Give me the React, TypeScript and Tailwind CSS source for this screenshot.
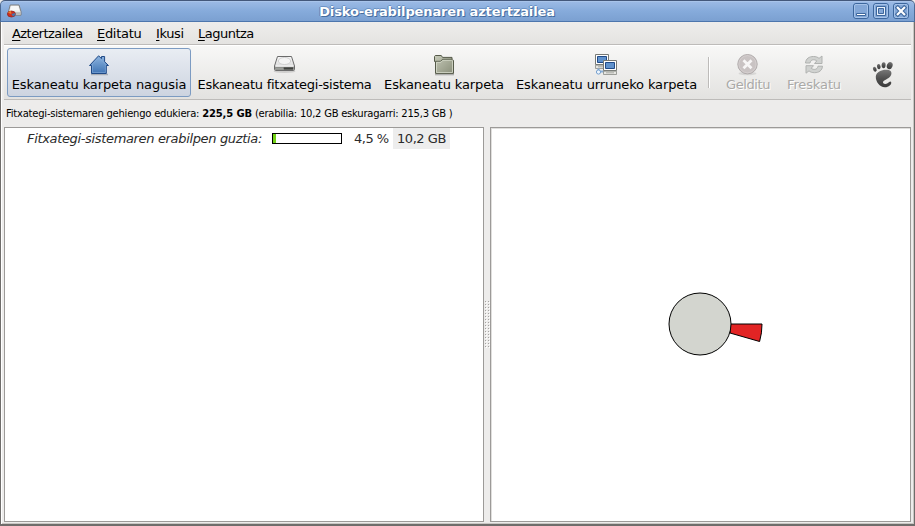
import type { ReactNode } from "react";

function DriveIcon() {
  return (
    <svg width="24" height="20" viewBox="0 0 24 20">
      <defs>
        <linearGradient id="drv" x1="0" y1="0" x2="0" y2="1">
          <stop offset="0" stopColor="#f8f8f8" />
          <stop offset="1" stopColor="#cfcfcf" />
        </linearGradient>
      </defs>
      <ellipse cx="11.5" cy="17.6" rx="11" ry="1.4" fill="#000" opacity=".13" />
      <path d="M4.5 2.5h14l3 9.5v3.5a1 1 0 0 1-1 1h-18a1 1 0 0 1-1-1v-3.5z" fill="url(#drv)" stroke="#6b6b6b" />
      <path d="M2.2 12.6h18.6v3.2H2.2z" fill="#7d7f7b" />
      <path d="M11 13.5h9v2h-9z" fill="#40423f" />
      <path d="M3 13.5h7v2H3z" fill="#9b9d99" />
      <ellipse cx="11.5" cy="7" rx="6.2" ry="3.5" fill="#f4f4f4" stroke="#c9c9c9" strokeWidth=".8" />
      <path d="M2.6 12.1h17.8" stroke="#fff" />
    </svg>
  );
}

function HomeIcon() {
  return (
    <svg width="22" height="22" viewBox="0 0 22 22">
      <defs>
        <linearGradient id="home" x1="0" y1="0" x2="0" y2="1">
          <stop offset="0" stopColor="#8db4df" />
          <stop offset="1" stopColor="#3f74b4" />
        </linearGradient>
      </defs>
      <path d="M3 20.5h17" stroke="#000" opacity=".22" strokeWidth="1.5" />
      <path d="M1.5 11.5 10.6 1.8l2.9 2.8V2.5h3.1v5.2l3.9 3.8h-2.2v8H3.5v-8z" fill="url(#home)" stroke="#204a87" strokeLinejoin="round" />
      <path d="M4.5 18.5v-8.4l6.1-6.6 6.8 6.6v8.4z" fill="none" stroke="#86aedb" strokeWidth=".7" opacity=".8" />
    </svg>
  );
}

function FolderIcon() {
  return (
    <svg width="22" height="22" viewBox="0 0 22 22">
      <defs>
        <linearGradient id="fold" x1="0" y1="0" x2="1" y2="1">
          <stop offset="0" stopColor="#c6cab9" />
          <stop offset="1" stopColor="#898e79" />
        </linearGradient>
      </defs>
      <path d="M2 20.6h19" stroke="#000" opacity=".25" strokeWidth="1.5" />
      <path d="M1.5 2.5 2.3 1.5h6l1.2 1.9h9.5v3H20.5v13h-18V7.5H1.5z" fill="url(#fold)" stroke="#555a49" strokeLinejoin="round" />
      <path d="M2.5 7.3h5l2-2h10" fill="none" stroke="#555a49" />
      <path d="M3.5 18.5V8.3h4.4l2-2h9.6v12.2z" fill="none" stroke="#d7dacb" strokeWidth=".8" />
    </svg>
  );
}

function Monitor({ x, y }: { x: number; y: number }) {
  return (
    <g transform={`translate(${x} ${y})`}>
      <path d="M.5.5h13v10H.5z" fill="#fff" stroke="#777975" />
      <path d="M2.5 2.5h9v6h-9z" fill="#5f91cc" stroke="#204a87" />
      <path d="M.5 11.2h13v3.3H.5z" fill="#e6e6e2" stroke="#888a85" strokeWidth=".8" />
      <path d="M3 12.8h8" stroke="#aaaca7" />
    </g>
  );
}

function NetworkIcon() {
  return (
    <svg width="24" height="22" viewBox="0 0 24 22">
      <Monitor x={0} y={0} />
      <path d="M3.5 14.5v3H10" stroke="#89add6" strokeWidth="2" fill="none" />
      <circle cx="3.5" cy="18" r="2.1" fill="#eef5fc" stroke="#74a0d0" />
      <Monitor x={8} y={6} />
    </svg>
  );
}

function StopIcon() {
  return (
    <svg width="24" height="22" viewBox="0 0 24 22">
      <ellipse cx="11.5" cy="19.5" rx="9" ry="1.8" fill="#000" opacity=".09" />
      <circle cx="11.5" cy="10.2" r="9.7" fill="#c9c3c3" stroke="#b0abab" />
      <circle cx="11.5" cy="10.2" r="8.6" fill="none" stroke="#d8d3d3" strokeWidth=".7" />
      <path d="m7.5 6.2 8 8m0-8-8 8" stroke="#f7f6f6" strokeWidth="2.8" />
    </svg>
  );
}

function RefreshIcon() {
  return (
    <svg width="22" height="22" viewBox="0 0 22 22" fill="#d0d2d0" stroke="#b0b2b0" strokeLinejoin="round">
      <path d="M2.5 9C2.8 4.6 6.2 2.5 10.4 2.5c2.5 0 4.3.6 5.6 1.9l3-2.4v7.5h-7.5l2.3-2.6C11.3 5 7.6 5.4 7 9z" />
      <path d="M19.5 12.2c-.3 4.4-3.7 6.5-7.9 6.5-2.5 0-4.3-.6-5.6-1.9l-3 2.4v-7.5h7.5l-2.3 2.6c2.5 1.9 6.2 1.5 6.8-2.1z" />
    </svg>
  );
}

function GnomeFoot() {
  return (
    <svg width="22" height="28" viewBox="0 0 22 28">
      <defs>
        <linearGradient id="foot" x1="0" y1="0" x2="0" y2="1">
          <stop offset="0" stopColor="#777" />
          <stop offset=".5" stopColor="#505050" />
          <stop offset="1" stopColor="#3b3b3b" />
        </linearGradient>
      </defs>
      <g fill="url(#foot)">
        <ellipse cx="17.7" cy="4.6" rx="2.8" ry="3.7" transform="rotate(22 17.7 4.6)" />
        <ellipse cx="11.6" cy="4.2" rx="2" ry="3" transform="rotate(3 11.6 4.2)" />
        <ellipse cx="6.8" cy="5.6" rx="1.8" ry="2.7" transform="rotate(-12 6.8 5.6)" />
        <ellipse cx="2.8" cy="8.2" rx="1.7" ry="2.5" transform="rotate(-25 2.8 8.2)" />
        <path d="M16.6 8.9C11.8 7.9 4.2 9.8 3.8 15.6c-.3 5.2 4 10.7 9 10.7 4.1 0 7-3 6.4-5.1-.6-1.7-2.1-.2-3.7 1-2.3 1.7-5.4.2-4.3-1.8.9-1.6 4.8-2.3 6.8-4.7 2.2-2.7 2-6.1-1.4-6.8z" />
      </g>
    </svg>
  );
}

function AppIcon() {
  return (
    <svg width="16" height="14" viewBox="0 0 16 14">
      <path d="M3.2 1h8.8l2 6.6v3.6H1.5V7.6z" fill="#e8e8e7" stroke="#777" strokeWidth=".9" />
      <path d="M4.3 1.9h7l1 4.6H3z" fill="#f8f8f8" />
      <path d="M2.5 8.2h11v2.5h-11z" fill="#b9bab8" />
      <ellipse cx="4.4" cy="10" rx="4" ry="3" fill="#cf2f21" stroke="#8d2017" strokeWidth=".7" />
      <path d="M4.4 10 8.2 9a4 3 0 0 1-2.2 3.4z" fill="#4675ae" />
      <path d="M4.4 10 1 8.8A4 3 0 0 1 4 7.1z" fill="#e7812c" />
    </svg>
  );
}

function WindowButton({ children }: { children: ReactNode }) {
  return (
    <svg width="16" height="16" viewBox="0 0 16 16">
      <rect x=".5" y=".5" width="15" height="15" rx="2.5" fill="#83a7d7" stroke="#3d679d" />
      <rect x="1.5" y="1.5" width="13" height="13" rx="1.5" fill="none" stroke="#a5c2e8" />
      {children}
    </svg>
  );
}

function ToolButton({ icon, label, box, text, active, disabled }: {
  icon: ReactNode; label: string; box: string; text: string; active?: boolean; disabled?: boolean;
}) {
  return (
    <button
      className={`flex h-[49px] shrink-0 flex-col items-center rounded-[3px] border pt-[5px] ${box} ${
        active ? "border-[#7c9bc2] bg-linear-to-b from-[#e9edf3] to-[#cdd4e0]" : "border-transparent"
      } ${disabled ? "text-[#aaa9a7] [text-shadow:1px_1px_0_#fff]" : ""}`}
    >
      <span className="flex h-[22px] items-start justify-center">{icon}</span>
      <span className={`whitespace-nowrap leading-[18px] ${text}`}>{label}</span>
    </button>
  );
}

const menus = [
  { key: "A", rest: "ztertzailea", box: "w-[85px] tracking-[-0.55px]" },
  { key: "E", rest: "ditatu", box: "w-[59px] tracking-[-0.3px]" },
  { key: "I", rest: "kusi", box: "w-[42px] tracking-[-0.4px]" },
  { key: "L", rest: "aguntza", box: "w-[70px] tracking-[-0.5px]" },
];

export default function App() {
  return (
    <div className="flex h-[526px] w-[915px] flex-col overflow-hidden bg-[#edeceb] font-['DejaVu_Sans',sans-serif] text-[13px] text-black">
      <header className="flex h-[22px] shrink-0 items-center rounded-t-[5px] border-x border-t border-b border-x-[#4d6a94] border-t-[#43587b] border-b-[#4d76ad] bg-linear-to-b from-[#9dbbe6] via-[#86abdb] to-[#7ba0d1] pl-[6px] pr-[5px] shadow-[inset_0_1px_0_#a8c4ea]">
        <AppIcon />
        <h1 className="flex-1 pr-[2px] pt-px text-center text-[13px] font-bold leading-[20px] tracking-[-0.13px] text-white [text-shadow:1px_1px_0_#456d9f,-1px_0_0_#5b82b7,0_-1px_0_#6c93c6]">
          Disko-erabilpenaren aztertzailea
        </h1>
        <div className="flex gap-1">
          <WindowButton><path d="M3.5 10.5h9v2h-9z" fill="#fff" stroke="#3d679d" /></WindowButton>
          <WindowButton>
            <path d="M3.5 3.5h9v9h-9z" fill="#e9f1fb" stroke="#3d679d" />
            <path d="M5.5 5.5h5v5h-5z" fill="#83a7d7" stroke="#3d679d" />
          </WindowButton>
          <WindowButton>
            <path d="m4.8 4.8 6.4 6.4m0-6.4-6.4 6.4" stroke="#3d679d" strokeWidth="4.2" strokeLinecap="square" />
            <path d="m4.8 4.8 6.4 6.4m0-6.4-6.4 6.4" stroke="#fff" strokeWidth="2.2" strokeLinecap="square" />
          </WindowButton>
        </div>
      </header>

      <div className="flex min-h-0 flex-1 flex-col border-x border-b-2 border-[#6f6d6b] pl-[3px] pr-[3px] shadow-[inset_1px_0_0_#fff,inset_-1px_0_0_#c8c6c3,inset_0_-1px_0_#c8c6c3]">
        <nav className="flex h-[23px] shrink-0 border-b border-[#bdbbb9] bg-linear-to-b from-[#eeedec] to-[#e4e3e1] pl-2 leading-[23px]">
          {menus.map((m) => (
            <span key={m.key} className={`${m.box} shrink-0 whitespace-nowrap`}>
              <span className="underline underline-offset-2">{m.key}</span>
              {m.rest}
            </span>
          ))}
        </nav>

        <div className="flex h-[55px] shrink-0 border-b border-[#bdbbb9] bg-linear-to-b from-[#f8f8f7] to-[#e3e2e0] pl-[3px] pt-[3px] shadow-[inset_0_1px_0_#fff]">
          <ToolButton icon={<HomeIcon />} label="Eskaneatu karpeta nagusia" box="w-[184px]" text="tracking-[-0.1px]" active />
          <ToolButton icon={<DriveIcon />} label="Eskaneatu fitxategi-sistema" box="w-[187px]" text="tracking-[-0.27px]" />
          <ToolButton icon={<FolderIcon />} label="Eskaneatu karpeta" box="w-[132px]" text="tracking-[-0.12px]" />
          <ToolButton icon={<NetworkIcon />} label="Eskaneatu urruneko karpeta" box="w-[193px]" text="tracking-[-0.12px]" />
          <i className="mx-[5px] mt-[9px] h-[31px] w-[2px] border-l border-[#bdbbb9] bg-white" />
          <ToolButton icon={<StopIcon />} label="Gelditu" box="w-[66px]" text="tracking-[-0.4px]" disabled />
          <ToolButton icon={<RefreshIcon />} label="Freskatu" box="w-[66px]" text="tracking-[-0.12px]" disabled />
          <div className="ml-[25px] mt-[13px]"><GnomeFoot /></div>
        </div>

        <p className="h-[27px] shrink-0 whitespace-nowrap pl-[2px] text-[10px] leading-[27px] tracking-[-0.23px]">
          <span>Fitxategi-sistemaren gehiengo edukiera: </span>
          <b className="tracking-[-0.15px]">225,5 GB</b>
          <span className="tracking-[-0.24px]"> (erabilia: 10,2 GB eskuragarri: 215,3 GB )</span>
        </p>

        <main className="mb-[2px] flex min-h-0 flex-1">
          <section className="w-[480px] shrink-0 border border-[#9c9a98] bg-white">
            <div className="flex h-[21px] items-center text-[#2b2b2b]">
              <span className="w-[246px] shrink-0 whitespace-nowrap pl-[22px] italic tracking-[-0.34px]">Fitxategi-sistemaren erabilpen guztia:</span>
              <span className="ml-[21px] flex h-[11px] w-[70px] shrink-0 border border-black">
                <i className="w-[3px] bg-[#73d216]" />
              </span>
              <span className="ml-3 w-[39px] shrink-0 whitespace-nowrap tracking-[-0.5px]">4,5 %</span>
              <span className="h-[21px] w-[57px] shrink-0 whitespace-nowrap bg-[#ededed] pl-[4px] leading-[21px] tracking-[-0.45px]">10,2 GB</span>
            </div>
          </section>
          <div className="flex w-[6px] shrink-0 items-center justify-center">
            <svg width="5" height="48">
              {Array.from({ length: 16 }, (_, i) => (
                <path key={i} d={`M0 ${i * 3 + 0.5}h1M3 ${i * 3 + 0.5}h1`} stroke="#a5a3a1" />
              ))}
              {Array.from({ length: 16 }, (_, i) => (
                <path key={i} d={`M1 ${i * 3 + 1.5}h1M4 ${i * 3 + 1.5}h1`} stroke="#fff" />
              ))}
            </svg>
          </div>
          <section className="flex-1 border border-[#9c9a98] bg-white shadow-[inset_1px_1px_0_#e0dfdd]">
            <svg width="418" height="392" viewBox="491 128 418 392">
              <path d="M730.5 324H762a62 62 0 0 1-2.4 17.5L730 333z" fill="#e22424" stroke="#000" strokeLinejoin="round" />
              <circle cx="700" cy="324" r="31" fill="#d3d5cf" stroke="#000" />
            </svg>
          </section>
        </main>
      </div>
    </div>
  );
}
